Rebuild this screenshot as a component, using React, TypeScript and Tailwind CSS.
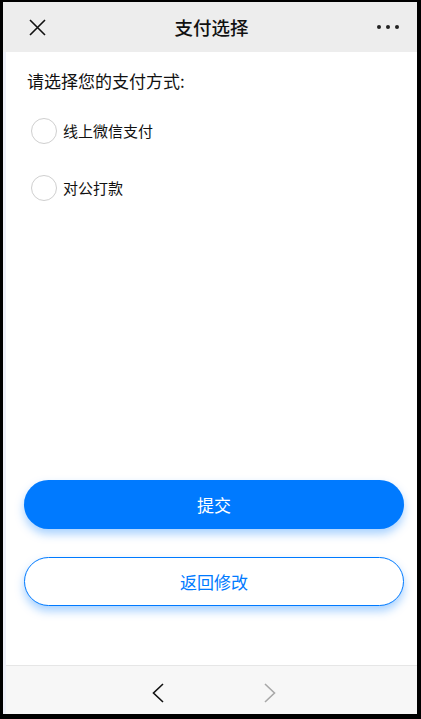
import React from "react";

function Radio({ label }: { label: string }) {
  return (
    <div className="flex items-center h-[26px]">
      <div className="w-[26px] h-[26px] rounded-full border border-[#cfcfcf] bg-white" />
      <span className="ml-[6px] text-[15px] leading-[26px] text-[#111]">{label}</span>
    </div>
  );
}

export default function App() {
  return (
    <div
      className="w-[421px] h-[719px] bg-black pt-[2px] pl-[3px] pr-[4px] pb-[5px] flex flex-col"
      style={{ fontFamily: '"Noto Sans CJK SC", "Noto Sans", sans-serif' }}
    >
      <div className="h-[50px] bg-[#ededed] flex items-center justify-between px-[26px] shrink-0">
        <svg width="17" height="17" viewBox="0 0 17 17">
          <path d="M1 1 L16 16 M16 1 L1 16" stroke="#111" strokeWidth="1.6" fill="none" />
        </svg>
        <div className="text-[18.5px] font-medium text-[#111] leading-none">支付选择</div>
        <div className="flex items-center gap-[5px] mr-[-8px]">
          <span className="w-[4px] h-[4px] rounded-full bg-[#222]" />
          <span className="w-[4px] h-[4px] rounded-full bg-[#222]" />
          <span className="w-[4px] h-[4px] rounded-full bg-[#222]" />
        </div>
      </div>
      <div className="flex-1 flex flex-col bg-white border-l-[3px] border-[#eef0f8]">
        <div className="pl-[21px] pt-[17px] text-[17px] leading-[24px] text-[#111]">
          请选择您的支付方式:
        </div>
        <div className="pl-[25px] pt-[25px] flex flex-col gap-[31px]">
          <Radio label="线上微信支付" />
          <Radio label="对公打款" />
        </div>
        <div className="flex-1" />
        <div className="ml-[18px] mr-[13px] flex flex-col gap-[28px] mb-[59px]">
          <button className="h-[49px] rounded-full bg-[#007aff] text-white text-[17px] shadow-[0_5px_10px_rgba(0,122,255,0.35)]">
            提交
          </button>
          <button className="h-[49px] rounded-full bg-white border border-[#007aff] text-[#007aff] text-[17px] shadow-[0_5px_10px_rgba(0,122,255,0.35)]">
            返回修改
          </button>
        </div>
        <div className="h-[49px] bg-[#f7f7f7] border-t border-[#e6e6e6] flex items-center justify-center gap-[100px] pl-[5px] pt-[5px] shrink-0">
          <svg width="12" height="20" viewBox="0 0 12 20">
            <path d="M11 1 L1.5 10 L11 19" stroke="#111" strokeWidth="1.6" fill="none" />
          </svg>
          <svg width="12" height="20" viewBox="0 0 12 20">
            <path d="M1 1 L10.5 10 L1 19" stroke="#a8a8a8" strokeWidth="1.6" fill="none" />
          </svg>
        </div>
      </div>
    </div>
  );
}
